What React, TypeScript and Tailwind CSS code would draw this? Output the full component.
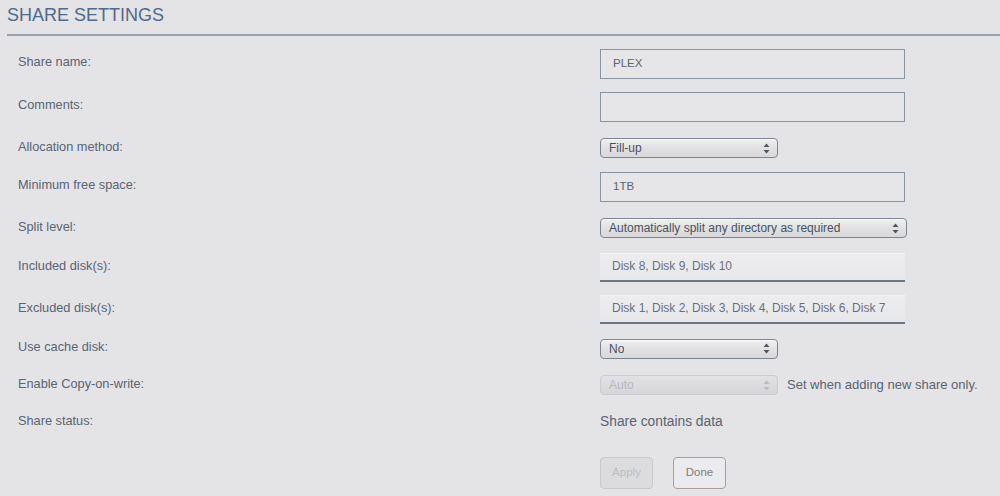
import type { ReactNode } from "react";

const font = { fontFamily: '"Liberation Sans", Arial, sans-serif' };

// small up/down chevron pair used by the native-looking selects
const SelectArrows = ({ disabled = false }: { disabled?: boolean }) => (
  <svg width="7" height="11" viewBox="0 0 7 11" className="shrink-0">
    <path d="M3.5 0.5 L6.5 4 L0.5 4 Z" fill={disabled ? "#b9bcc2" : "#4f5560"} />
    <path d="M3.5 10.5 L6.5 7 L0.5 7 Z" fill={disabled ? "#b9bcc2" : "#4f5560"} />
  </svg>
);

interface SelectProps {
  value: string;
  width: string;
  disabled?: boolean;
}

const Select = ({ value, width, disabled = false }: SelectProps) => (
  <div
    className={`${width} h-[20px] flex items-center justify-between pl-[8px] pr-[7px] rounded-[4px] border text-[12px] ${
      disabled
        ? "border-[#c9cbd0] bg-gradient-to-b from-[#e2e2e4] to-[#d6d6d9] text-[#b6b8bd]"
        : "border-[#7c8693] bg-gradient-to-b from-[#f0f0f1] via-[#e1e1e3] to-[#d9d9dc] text-[#4a515c] shadow-[inset_0_1px_0_#fafafa]"
    }`}
  >
    <span className="truncate">{value}</span>
    <SelectArrows disabled={disabled} />
  </div>
);

const TextInput = ({ value = "" }: { value?: string }) => (
  <div className="w-[305px] h-[30px] border border-[#8a94a1] bg-[#e6e5e8] flex items-center pl-[12px] text-[11.5px] text-[#5c6470]">
    {value}
  </div>
);

// disk list fields: flat light box with a dark underline
const DiskField = ({ value }: { value: string }) => (
  <div className="w-[305px] h-[29px] border-b-2 border-[#6b7683] bg-gradient-to-b from-[#ededef] to-[#e8e8ea] shadow-[inset_0_1px_0_#f4f4f6] flex items-end pb-[5px] pl-[12px] text-[12px] text-[#68707c]">
    {value}
  </div>
);

interface RowProps {
  label: string;
  h: string;
  children: ReactNode;
}

const Row = ({ label, h, children }: RowProps) => (
  <div className={`flex items-center ${h}`}>
    <div className="w-[600px] pl-[18px] pb-[3px] text-[12.75px] text-[#5a6472]">{label}</div>
    <div className="flex items-center">{children}</div>
  </div>
);

export default function App() {
  return (
    <div className="w-[1000px] h-[496px] bg-[#e4e3e6] overflow-hidden" style={font}>
      <div className="pl-[7px]">
        <div className="h-[34px] flex items-center text-[18px] text-[#4f6a8b] pb-[3px]">
          SHARE SETTINGS
        </div>
        <div className="h-[2px] bg-[#9aa2ad]" />
      </div>

      <div className="pt-[8px]">
        <Row label="Share name:" h="h-[39px]">
          <TextInput value="PLEX" />
        </Row>
        <Row label="Comments:" h="h-[47px]">
          <TextInput />
        </Row>
        <Row label="Allocation method:" h="h-[36px]">
          <Select value="Fill-up" width="w-[178px]" />
        </Row>
        <Row label="Minimum free space:" h="h-[41px]">
          <TextInput value="1TB" />
        </Row>
        <Row label="Split level:" h="h-[42px]">
          <Select value="Automatically split any directory as required" width="w-[307px]" />
        </Row>
        <Row label="Included disk(s):" h="h-[36px]">
          <DiskField value="Disk 8, Disk 9, Disk 10" />
        </Row>
        <Row label="Excluded disk(s):" h="h-[48px]">
          <DiskField value="Disk 1, Disk 2, Disk 3, Disk 4, Disk 5, Disk 6, Disk 7" />
        </Row>
        <Row label="Use cache disk:" h="h-[31px]">
          <Select value="No" width="w-[178px]" />
        </Row>
        <Row label="Enable Copy-on-write:" h="h-[42px]">
          <Select value="Auto" width="w-[178px]" disabled />
          <span className="ml-[9px] text-[13px] text-[#5a6472]">Set when adding new share only.</span>
        </Row>
        <Row label="Share status:" h="h-[32px]">
          <span className="text-[13.8px] text-[#5a6472]">Share contains data</span>
        </Row>

        <div className="flex gap-[20px] pl-[600px] mt-[19px]">
          <button
            disabled
            className="w-[53px] h-[32px] rounded-[4px] border border-[#c9c9cd] bg-[#dcdcdf] text-[11.5px] text-[#bdbdc1]"
          >
            Apply
          </button>
          <button className="w-[53px] h-[32px] rounded-[4px] border border-[#ab9f96] bg-[#ebeaee] text-[11.5px] text-[#857d78]">
            Done
          </button>
        </div>
      </div>
    </div>
  );
}
